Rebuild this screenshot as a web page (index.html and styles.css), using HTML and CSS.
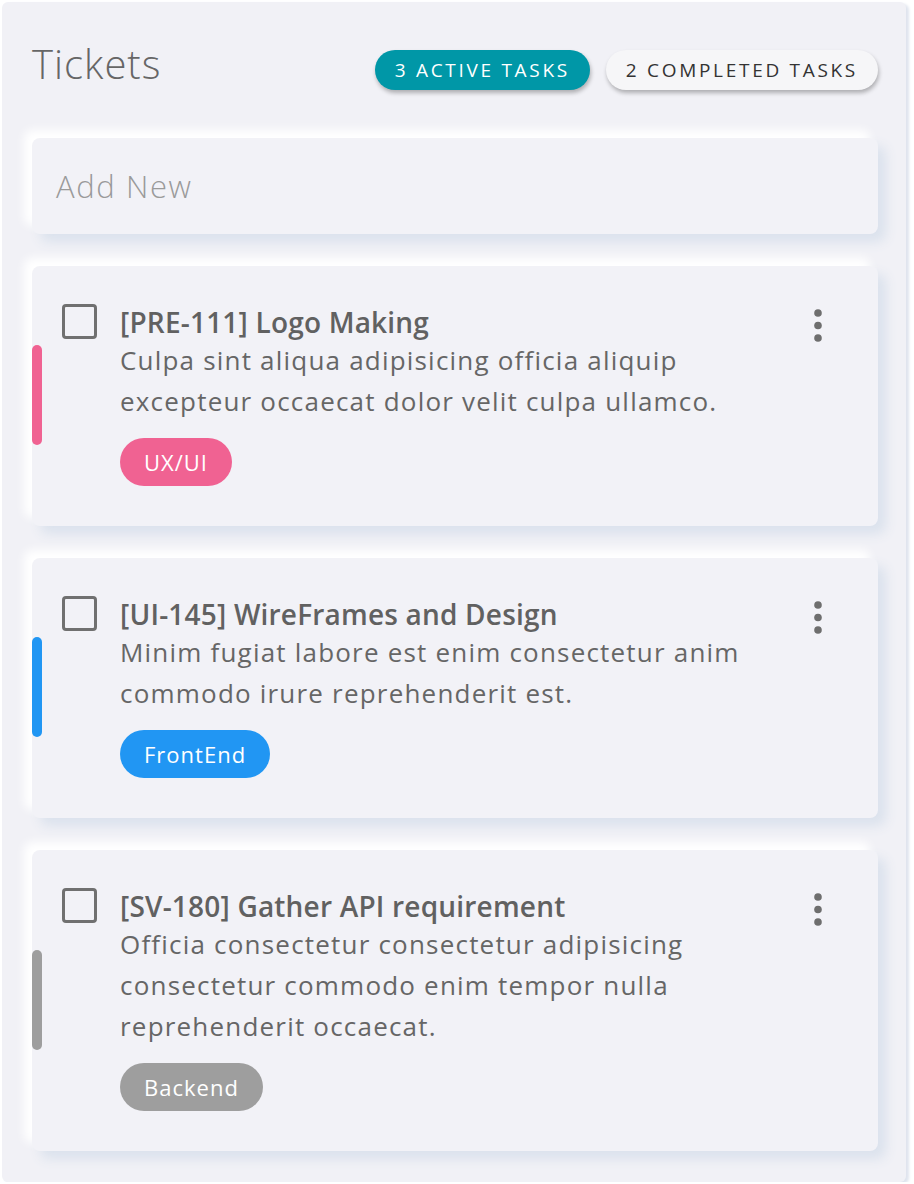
FILE: index.html
```html
<!DOCTYPE html>
<html lang="en">
<head>
<meta charset="utf-8">
<title>Tickets</title>
<link rel="stylesheet" href="styles.css">
</head>
<body>
<div class="panel">
  <header class="header">
    <h1 class="title">Tickets</h1>
    <div class="badges">
      <span class="badge badge-active">3 ACTIVE TASKS</span>
      <span class="badge badge-done">2 COMPLETED TASKS</span>
    </div>
  </header>

  <div class="card add-new">Add New</div>

  <div class="card ticket">
    <span class="bar bar-pink"></span>
    <span class="check"></span>
    <div class="ticket-body">
      <div class="ticket-title">[PRE-111] Logo Making</div>
      <p class="ticket-desc">Culpa sint aliqua adipisicing officia aliquip excepteur occaecat dolor velit culpa ullamco.</p>
      <span class="tag tag-pink">UX/UI</span>
    </div>
    <svg class="kebab" width="12" height="34" viewBox="0 0 12 34"><circle cx="6" cy="4" r="3.8"/><circle cx="6" cy="16.5" r="3.8"/><circle cx="6" cy="29" r="3.8"/></svg>
  </div>

  <div class="card ticket">
    <span class="bar bar-blue"></span>
    <span class="check"></span>
    <div class="ticket-body">
      <div class="ticket-title">[UI-145] WireFrames and Design</div>
      <p class="ticket-desc">Minim fugiat labore est enim consectetur anim commodo irure reprehenderit est.</p>
      <span class="tag tag-blue">FrontEnd</span>
    </div>
    <svg class="kebab" width="12" height="34" viewBox="0 0 12 34"><circle cx="6" cy="4" r="3.8"/><circle cx="6" cy="16.5" r="3.8"/><circle cx="6" cy="29" r="3.8"/></svg>
  </div>

  <div class="card ticket">
    <span class="bar bar-grey"></span>
    <span class="check"></span>
    <div class="ticket-body">
      <div class="ticket-title">[SV-180] Gather API requirement</div>
      <p class="ticket-desc">Officia consectetur consectetur adipisicing consectetur commodo enim tempor nulla reprehenderit occaecat.</p>
      <span class="tag tag-grey">Backend</span>
    </div>
    <svg class="kebab" width="12" height="34" viewBox="0 0 12 34"><circle cx="6" cy="4" r="3.8"/><circle cx="6" cy="16.5" r="3.8"/><circle cx="6" cy="29" r="3.8"/></svg>
  </div>
</div>
</body>
</html>
```

FILE: styles.css
```css
* { box-sizing: border-box; }

html, body {
  margin: 0;
  background: #ffffff;
}

body {
  font-family: "Open Sans", "Noto Sans", sans-serif;
  color: #666;
}

.panel {
  margin: 2px 0 0 2px;
  width: 904px;
  height: 1180px;
  background: #f1f1f6;
  border-radius: 6px;
  box-shadow: 3px 2px 3px #dfe4ee;
  padding: 48px 28px 0 30px;
  display: flex;
  flex-direction: column;
  gap: 32px;
}

.header {
  display: flex;
  align-items: flex-start;
  justify-content: space-between;
  height: 40px;
  margin-bottom: 16px;
}

.title {
  margin: -6px 0 0;
  font-size: 40px;
  line-height: 40px;
  font-weight: 300;
  color: #666;
  letter-spacing: 1px;
}

.badges {
  display: flex;
  gap: 16px;
}

.badge {
  height: 40px;
  line-height: 40px;
  padding: 0 20px;
  border-radius: 20px;
  font-size: 19px;
  letter-spacing: 2.7px;
  box-shadow: 1px 3px 4px rgba(0, 0, 0, 0.28);
  white-space: nowrap;
}

.badge-active {
  background: #0097a7;
  color: #fff;
}

.badge-done {
  background: #f6f6f8;
  color: #333;
}

.card {
  background: #f2f2f7;
  border-radius: 8px;
  box-shadow: -8px -8px 10px #ffffff, 8px 8px 12px #dbe2ed;
}

.add-new {
  height: 96px;
  display: flex;
  align-items: center;
  padding-left: 24px;
  font-size: 31px;
  font-weight: 300;
  letter-spacing: 1.6px;
  color: #9a9a9a;
}

.ticket {
  display: flex;
  align-items: flex-start;
  padding: 38px 54px 40px 0;
}

.bar {
  flex: none;
  width: 10px;
  height: 100px;
  border-radius: 5px;
  align-self: center;
  margin-right: 20px;
}

.bar-pink, .tag-pink { background: #f06292; }
.bar-blue, .tag-blue { background: #2196f3; }
.bar-grey, .tag-grey { background: #9e9e9e; }

.check {
  flex: none;
  width: 35px;
  height: 35px;
  border: 3px solid #707070;
  border-radius: 4px;
  margin-right: 23px;
}

.ticket-body {
  flex: 1;
  padding-right: 20px;
}

.ticket-title {
  font-size: 28px;
  line-height: 36px;
  font-weight: 600;
  color: #616161;
  letter-spacing: 0.2px;
}

.ticket-desc {
  margin: 0 0 16px;
  font-size: 26px;
  line-height: 41px;
  color: #666;
  letter-spacing: 1.2px;
}

.tag {
  display: inline-block;
  height: 48px;
  line-height: 48px;
  padding: 0 24px;
  border-radius: 24px;
  font-size: 22px;
  letter-spacing: 1px;
  color: #fff;
}

.kebab {
  flex: none;
  fill: #6e6e6e;
  margin-top: 5px;
}
```
